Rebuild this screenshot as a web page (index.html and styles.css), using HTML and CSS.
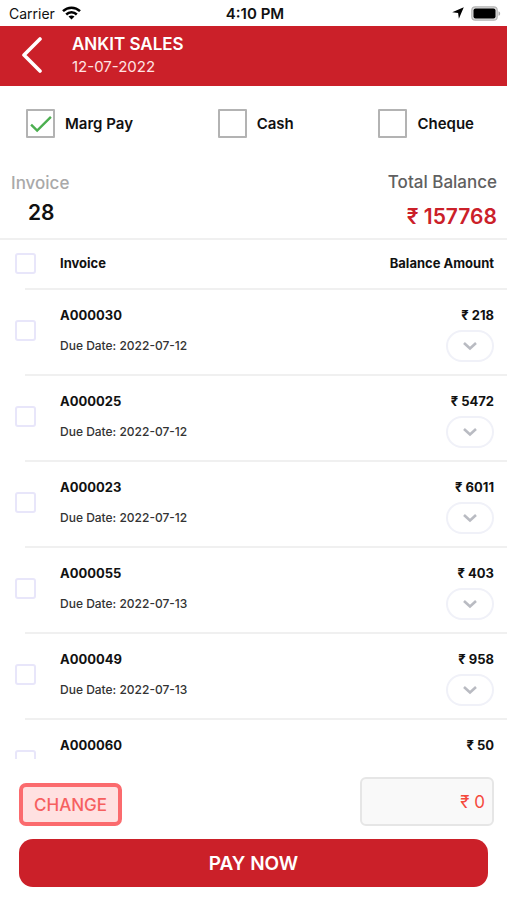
FILE: index.html
```html
<!DOCTYPE html>
<html lang="en">
<head>
<meta charset="utf-8">
<meta name="viewport" content="width=device-width, initial-scale=1">
<title>Ankit Sales</title>
<link rel="stylesheet" href="styles.css">
</head>
<body>
<div class="app">
  <div class="status">
    <div class="status-left">
      <span>Carrier</span>
      <svg width="19" height="14" viewBox="0 0 19 14" aria-hidden="true"><g fill="none" stroke="#000" stroke-width="2.5"><path d="M1 5.2C5.800.6 13.200.6 18 5.200"/><path d="M4.200 8.500c3-2.900 7.600-2.900 10.600 0"/></g><path d="M6.500 10.600c1.700-1.500 4.300-1.500 6 0l-3 3z"/></svg>
    </div>
    <span class="status-time">4:10 PM</span>
    <div class="status-right">
      <svg width="12" height="12" viewBox="0 0 11 11" aria-hidden="true"><path d="M10.800.2 6.300 10.800 5.600 5.400.2 4.700z"/></svg>
      <svg width="30" height="15" viewBox="0 0 30 15" aria-hidden="true"><rect x=".8" y=".8" width="25.400" height="13.400" rx="3.500" fill="#ddd" stroke="#b5b5b5" stroke-width="1.200"/><rect x="2.500" y="2.500" width="22" height="10" rx="2"/><path d="M27.500 5.200c2.200.8 2.200 3.800 0 4.600z" fill="#aaa"/></svg>
    </div>
  </div>

  <header class="header">
    <button class="back" type="button" aria-label="Back">
      <svg width="20" height="36" viewBox="0 0 20 36" aria-hidden="true"><path d="M18 2 2 18l16 16" fill="none" stroke="#fff" stroke-width="3.600" stroke-linecap="round" stroke-linejoin="round"/></svg>
    </button>
    <div>
      <h1 class="title">ANKIT SALES</h1>
      <p class="date">12-07-2022</p>
    </div>
  </header>

  <div class="methods">
    <label class="method"><span class="tick"><input type="checkbox" class="box" checked><svg width="22" height="18" viewBox="0 0 20 16" aria-hidden="true"><path d="M1 8.500 6.500 14 19 1.500" fill="none" stroke="#4caf50" stroke-width="2.200"/></svg></span>Marg Pay</label>
    <label class="method"><span class="tick"><input type="checkbox" class="box"></span>Cash</label>
    <label class="method"><span class="tick"><input type="checkbox" class="box"></span>Cheque</label>
  </div>

  <section class="summary">
    <div>
      <p class="count-label">Invoice</p>
      <p class="count">28</p>
    </div>
    <div class="total">
      <p class="total-label">Total Balance</p>
      <p class="total-value">₹ 157768</p>
    </div>
  </section>

  <main class="list">
    <div class="list-head">
      <input type="checkbox" class="select" aria-label="Select all invoices">
      <span>Invoice</span>
      <span>Balance Amount</span>
    </div>
    <div class="row">
      <input type="checkbox" class="select" aria-label="Select A000030">
      <div class="info"><p class="number">A000030</p><p class="due">Due Date: 2022-07-12</p></div>
      <div class="side"><p class="number">₹ 218</p><button class="expand" type="button" aria-label="Details of A000030"><svg width="14" height="9" viewBox="0 0 14 9" aria-hidden="true"><path d="m1 1 6 5.500L13 1"/></svg></button></div>
    </div>
    <div class="row">
      <input type="checkbox" class="select" aria-label="Select A000025">
      <div class="info"><p class="number">A000025</p><p class="due">Due Date: 2022-07-12</p></div>
      <div class="side"><p class="number">₹ 5472</p><button class="expand" type="button" aria-label="Details of A000025"><svg width="14" height="9" viewBox="0 0 14 9" aria-hidden="true"><path d="m1 1 6 5.500L13 1"/></svg></button></div>
    </div>
    <div class="row">
      <input type="checkbox" class="select" aria-label="Select A000023">
      <div class="info"><p class="number">A000023</p><p class="due">Due Date: 2022-07-12</p></div>
      <div class="side"><p class="number">₹ 6011</p><button class="expand" type="button" aria-label="Details of A000023"><svg width="14" height="9" viewBox="0 0 14 9" aria-hidden="true"><path d="m1 1 6 5.500L13 1"/></svg></button></div>
    </div>
    <div class="row">
      <input type="checkbox" class="select" aria-label="Select A000055">
      <div class="info"><p class="number">A000055</p><p class="due">Due Date: 2022-07-13</p></div>
      <div class="side"><p class="number">₹ 403</p><button class="expand" type="button" aria-label="Details of A000055"><svg width="14" height="9" viewBox="0 0 14 9" aria-hidden="true"><path d="m1 1 6 5.500L13 1"/></svg></button></div>
    </div>
    <div class="row">
      <input type="checkbox" class="select" aria-label="Select A000049">
      <div class="info"><p class="number">A000049</p><p class="due">Due Date: 2022-07-13</p></div>
      <div class="side"><p class="number">₹ 958</p><button class="expand" type="button" aria-label="Details of A000049"><svg width="14" height="9" viewBox="0 0 14 9" aria-hidden="true"><path d="m1 1 6 5.500L13 1"/></svg></button></div>
    </div>
    <div class="row">
      <input type="checkbox" class="select" aria-label="Select A000060">
      <div class="info"><p class="number">A000060</p></div>
      <div class="side"><p class="number">₹ 50</p><button class="expand" type="button" aria-label="Details of A000060"><svg width="14" height="9" viewBox="0 0 14 9" aria-hidden="true"><path d="m1 1 6 5.500L13 1"/></svg></button></div>
    </div>
  </main>

  <footer class="footer">
    <div class="footer-row">
      <button class="change" type="button">CHANGE</button>
      <input class="amount" type="text" value="₹ 0" aria-label="Amount to pay">
    </div>
    <button class="pay" type="button">PAY NOW</button>
  </footer>
</div>
</body>
</html>
```
FILE: styles.css
```css
* {
  box-sizing: border-box;
}

body,
h1,
p {
  margin: 0;
}

body {
  background: #fff;
  color: #111;
  font-family: Inter, "Liberation Sans", sans-serif;
}

button,
input {
  margin: 0;
  font-family: inherit;
}

svg {
  display: block;
}

.app {
  display: flex;
  flex-direction: column;
  height: 100vh;
}

.status {
  display: grid;
  grid-template-columns: 1fr auto 1fr;
  align-items: center;
  flex: none;
  height: 26px;
  padding: 0 6px 0 9px;
  font-size: 14px;
}

.status-left,
.status-right {
  display: flex;
  align-items: center;
  gap: 7px;
}

.status-right {
  justify-content: flex-end;
}

.status-time {
  font-size: 15px;
  font-weight: 600;
}

.header {
  display: flex;
  flex: none;
  gap: 30px;
  align-items: center;
  height: 60px;
  padding: 0 22px 2px;
  background: #cb2029;
  color: #fff;
}

.back {
  padding: 0;
  border: 0;
  background: none;
}

.title {
  font-size: 17px;
  font-weight: 600;
  line-height: 20px;
}

.date {
  margin-top: 3px;
  color: #ffe3e3;
  font-size: 15px;
  line-height: 20px;
}

.methods {
  display: flex;
  flex: none;
  justify-content: space-between;
  padding: 23px 33px 23px 26px;
}

.method {
  display: flex;
  gap: 10px;
  align-items: center;
  font-size: 15px;
  font-weight: 600;
}

.tick {
  display: grid;
  place-items: center;
}

.tick > * {
  grid-area: 1 / 1;
}

.box {
  appearance: none;
  width: 29px;
  height: 29px;
  border: 2px solid #b3b3b3;
  border-radius: 1px;
  background: #fff;
}

.tick svg {
  z-index: 1;
  pointer-events: none;
}

.summary {
  display: flex;
  flex: none;
  justify-content: space-between;
  height: 79px;
  padding: 11px 10px 0 11px;
  border-bottom: 2px solid #f0f0f0;
}

.count-label,
.total-label {
  font-size: 17px;
  font-weight: 500;
  line-height: 20px;
}

.count-label {
  padding-top: 1px;
  color: #a9a9a9;
}

.count {
  margin-top: 8px;
  padding-left: 17px;
  font-size: 21px;
  font-weight: 600;
  line-height: 24px;
}

.total {
  text-align: right;
}

.total-label {
  color: #606060;
}

.total-value {
  margin-top: 13px;
  color: #cb2029;
  font-size: 21px;
  font-weight: 600;
  line-height: 24px;
}

.list {
  flex: 1;
  min-height: 0;
  overflow: hidden;
}

.list-head,
.row {
  display: grid;
  grid-template-columns: 21px 1fr auto;
  column-gap: 24px;
  padding: 0 13px 2px 15px;
}

.list-head {
  align-items: center;
  height: 48px;
  font-size: 13px;
  font-weight: 700;
}

.row {
  height: 86px;
  background: linear-gradient(#f0f0f0, #f0f0f0) 25px 0 / 100% 2px no-repeat;
}

.select {
  appearance: none;
  align-self: center;
  width: 21px;
  height: 21px;
  border: 2px solid #e8e6fa;
  border-radius: 3px;
  background: #fff;
}

.info,
.side {
  padding-top: 18px;
}

.side {
  display: flex;
  flex-direction: column;
  align-items: flex-end;
}

.number {
  font-size: 13px;
  font-weight: 700;
  line-height: 18px;
}

.due {
  margin-top: 13px;
  color: #333;
  font-size: 12px;
  font-weight: 500;
  line-height: 18px;
}

.expand {
  display: grid;
  place-items: center;
  width: 48px;
  height: 32px;
  margin-top: 6px;
  padding: 0;
  border: 2px solid #f0f1f8;
  border-radius: 16px;
  background: #fff;
}

.expand path {
  fill: none;
  stroke: #b9bbc2;
  stroke-width: 2.6;
}

.footer {
  display: flex;
  flex: none;
  flex-direction: column;
  gap: 13px;
  padding: 18px 13px 13px 19px;
}

.footer-row {
  display: flex;
  justify-content: space-between;
  align-items: flex-end;
}

.change {
  height: 43px;
  padding: 0 11px;
  border: 4px solid #fb6b6e;
  border-radius: 7px;
  background: #ffe1e1;
  color: #f6605f;
  font-size: 17px;
  font-weight: 500;
}

.amount {
  width: 134px;
  height: 49px;
  padding: 0 7px;
  border: 2px solid #e6e6e6;
  border-radius: 6px;
  background: #f9f9f9;
  color: #f5493d;
  font-size: 17px;
  text-align: right;
}

.pay {
  height: 48px;
  margin-right: 6px;
  border: 0;
  border-radius: 14px;
  background: #cb2029;
  color: #fff;
  font-size: 19px;
  font-weight: 600;
}
```
